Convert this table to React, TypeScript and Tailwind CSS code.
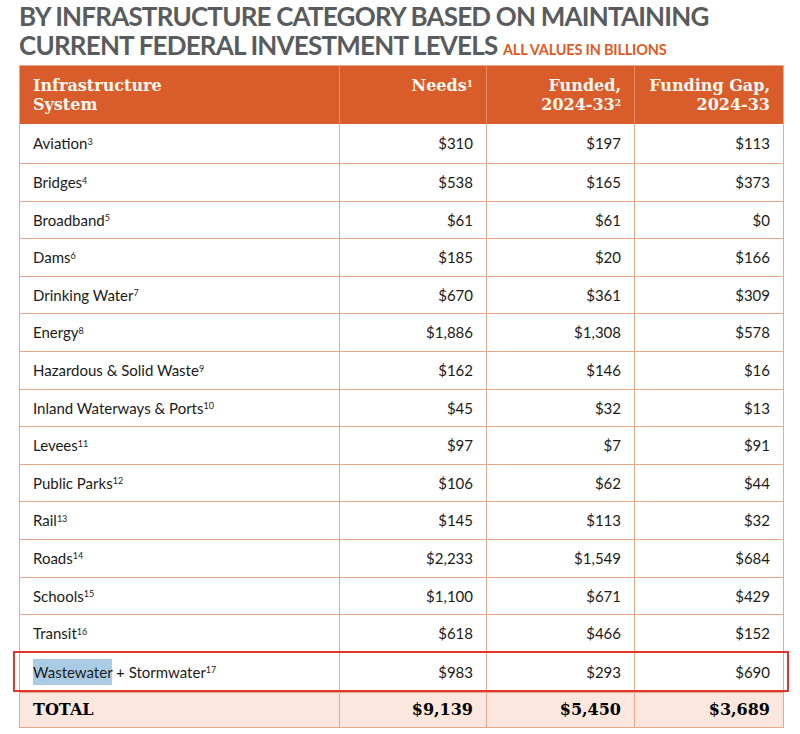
const rows: [string, string, string, string, string][] = [
  ['Aviation', '3', '$310', '$197', '$113'],
  ['Bridges', '4', '$538', '$165', '$373'],
  ['Broadband', '5', '$61', '$61', '$0'],
  ['Dams', '6', '$185', '$20', '$166'],
  ['Drinking Water', '7', '$670', '$361', '$309'],
  ['Energy', '8', '$1,886', '$1,308', '$578'],
  ['Hazardous & Solid Waste', '9', '$162', '$146', '$16'],
  ['Inland Waterways & Ports', '10', '$45', '$32', '$13'],
  ['Levees', '11', '$97', '$7', '$91'],
  ['Public Parks', '12', '$106', '$62', '$44'],
  ['Rail', '13', '$145', '$113', '$32'],
  ['Roads', '14', '$2,233', '$1,549', '$684'],
  ['Schools', '15', '$1,100', '$671', '$429'],
  ['Transit', '16', '$618', '$466', '$152'],
]

const serif = "font-['DejaVu_Serif',serif]"
const sans = "font-['Lato',sans-serif]"

export default function App() {
  return (
    <div className="w-[800px] h-[734px] bg-white overflow-hidden relative">
      {/* Title */}
      <div className={`${sans} pl-[19px] pt-[2px] font-bold text-[#595c5f] text-[26px] leading-[29px] tracking-[-0.8px]`}>
        <div>BY INFRASTRUCTURE CATEGORY BASED ON MAINTAINING</div>
        <div>
          CURRENT FEDERAL INVESTMENT LEVELS{' '}
          <span className="text-[#df5a25] text-[14.5px] leading-none tracking-[-0.2px]">ALL VALUES IN BILLIONS</span>
        </div>
      </div>

      {/* Table */}
      <div className="ml-[19px] mt-[5px] w-[765px] border border-[#e8a88b]">
        {/* Header */}
        <div className={`${serif} grid grid-cols-[320px_147px_148px_148px] bg-[#d95c2b] text-[#fff8f0] font-bold text-[16px] leading-[19px] h-[58px]`}>
          <div className="pl-[13px] pt-[10px] border-r border-[#e88a62]">
            Infrastructure<br />System
          </div>
          <div className="pr-[13px] pt-[10px] text-right border-r border-[#e88a62]">
            Needs<sup className="text-[9px]">1</sup>
          </div>
          <div className="pr-[13px] pt-[10px] text-right border-r border-[#e88a62]">
            Funded,<br />2024-33<sup className="text-[9px]">2</sup>
          </div>
          <div className="pr-[13px] pt-[10px] text-right">
            Funding Gap,<br />2024-33
          </div>
        </div>

        {rows.map(([name, note, needs, funded, gap], i) => (
          <div
            key={name}
            className={`${sans} grid grid-cols-[320px_147px_148px_148px] text-[15px] text-[#1b1b1b] border-b border-[#e8a88b] ${
              i === 0 ? 'h-[40px]' : 'h-[37.6px]'
            }`}
          >
            <div className="pl-[13px] flex items-center border-r border-[#e8a88b]">
              <span>
                {name}
                <sup className="text-[9px]">{note}</sup>
              </span>
            </div>
            <div className="pr-[13px] flex items-center justify-end border-r border-[#e8a88b]">{needs}</div>
            <div className="pr-[13px] flex items-center justify-end border-r border-[#e8a88b]">{funded}</div>
            <div className="pr-[13px] flex items-center justify-end">{gap}</div>
          </div>
        ))}

        {/* Wastewater row */}
        <div className={`${sans} grid grid-cols-[320px_147px_148px_148px] text-[15px] text-[#1b1b1b] border-b border-[#e8a88b] h-[40px]`}>
          <div className="pl-[13px] flex items-center border-r border-[#e8a88b]">
            <span>
              <span className="bg-[#a9cbe3] py-[4px]">Wastewater</span> + Stormwater
              <sup className="text-[9px]">17</sup>
            </span>
          </div>
          <div className="pr-[13px] flex items-center justify-end border-r border-[#e8a88b]">$983</div>
          <div className="pr-[13px] flex items-center justify-end border-r border-[#e8a88b]">$293</div>
          <div className="pr-[13px] flex items-center justify-end">$690</div>
        </div>

        {/* Total */}
        <div className={`${serif} grid grid-cols-[320px_147px_148px_148px] bg-[#fbe7de] font-bold text-[16px] text-black h-[34px]`}>
          <div className="pl-[13px] flex items-center border-r border-[#e8a88b]">TOTAL</div>
          <div className="pr-[13px] flex items-center justify-end border-r border-[#e8a88b]">$9,139</div>
          <div className="pr-[13px] flex items-center justify-end border-r border-[#e8a88b]">$5,450</div>
          <div className="pr-[13px] flex items-center justify-end">$3,689</div>
        </div>
      </div>

      {/* Red highlight box around wastewater row */}
      <div className="absolute left-[13px] top-[651px] w-[776px] h-[41px] border-2 border-[#e2362c] pointer-events-none" />
    </div>
  )
}
